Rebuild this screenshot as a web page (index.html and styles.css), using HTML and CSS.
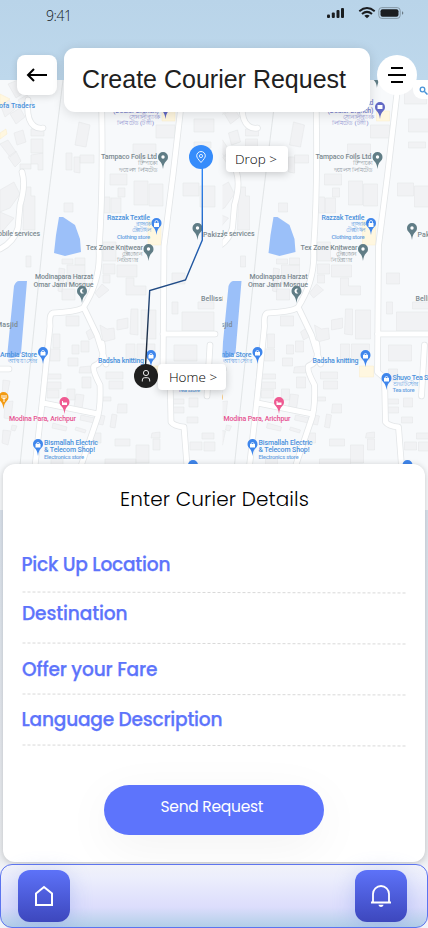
FILE: index.html
```html
<!DOCTYPE html>
<html lang="en">
<head>
<meta charset="utf-8">
<meta name="viewport" content="width=device-width, initial-scale=1">
<title>Create Courier Request</title>
<link rel="stylesheet" href="styles.css">
</head>
<body>
<main class="screen">
  <svg class="map" width="428" height="430" viewBox="0 80 428 430">
    <defs>
      <linearGradient id="route" x1="0" y1="0" x2="0" y2="1"><stop offset="0" stop-color="#2f86f6"/><stop offset=".4" stop-color="#2260b4"/><stop offset="1" stop-color="#1c1f25"/></linearGradient>
      <clipPath id="left"><rect x="0" y="80" width="223" height="430"/></clipPath>
      <clipPath id="right"><rect x="8" y="80" width="220" height="430"/></clipPath>
      <path id="pin" d="M0 8C-1-1-5 1-5-4A5 5 0 0 1 5-4C5 1 1-1 0 8Z"/>
      <path id="roads" d="M101 80Q104 180 99 250Q101 280 83 308Q75 312 53 313Q49 314 50 326L43 395 35 466M84 308L97 335 106 364M102 343Q106 362 94 366Q92 370 100 385Q101 410 96 422L81 466M43 403L98 414M184 80L173 175 164 246 163 372 170 378 171 422Q174 426 184 427L187 466M163 334H215M22 172Q26 185 20 205L18 228Q14 242 0 249M28 100Q26 120 34 126Q38 129 43 128M-5 369H9M210 345L207 396"/>
      <g id="tile">
        <path class="block" d="M8 84l10-4 7 12-9 6zM18 100l9-5 6 8-10 6zM0 104l9-4 6 9-10 8zM10 114l10-6 5 9-9 7zM14 133l9-3 3 12-9 3zM31 129h13v7h-13zM31 139h12v14h-12zM31 155l12-2v17h-5v-6h-7zM20 164h11v5h-11zM24 187h7v9h4v34l-12 0zM0 144l8-4 8 12-6 5zM8 157l8-6 5 10-6 6zM0 190l14-8 6 12-10 14-10 4zM0 212l14 6-14 16zM64 203h9v9h-9zM79 122l11 3-4 22-11-2zM66 153h6v17h-6zM80 155h14v8h-14zM74 157h6v16l-6-1zM156 125h19v13h-19zM133 144h23v14h-23zM110 174h17v11h-17zM118 188h7v9h-7zM134 181h14v24h-14zM149 184h14v22h-14zM104 197h6v16h-6zM111 198h10v15h-10zM183 183h16v13h-16zM200 186h15v21h-15zM194 119h20v13h-20zM194 142h17v6h-17zM86 84h8v14h-8zM190 86h22v18h-22zM103 242h13v19h-13zM103 264h12v10h-12zM117 265h20v12h-20zM103 275h7v8h-7zM126 278h8v8h12v9h-20zM172 273h13v11h-13zM62 289h13v11h-13zM62 259h11v5h-11zM75 258h10v7h-10zM67 265h18v19h-18zM59 268l6 1-3 23-4-1zM95 293l7-9 7 6-10 8zM26 256h5v11h-5zM66 316h13v10h-13zM53 334h7v14h-7zM86 332l6-4 4 8-7 4zM100 325l7 4 7-1 1 11-12 3zM131 309h7v26l-8-1zM141 310h15v29h-15zM172 302h6v12h-6zM182 312h32v19h-32zM198 302h16v7h-16zM72 345h7v9h-7zM81 341h8v11h-8zM117 320l11-2v10l-11 2zM126 344h9v16h-9zM137 344h18v16h-18zM174 345h23v16h-23zM50 349h10v12h-10zM68 358h10v8h-10zM80 367l11-1v7h-12zM82 377h9v11h-9zM47 374h14v5h-14zM47 382h14v7h-14zM47 390h12v8h-12zM67 389h8v11h-8zM76 394l8 1-2 14-8-2zM106 372h17v7h-17zM109 381h14v8h-14zM103 397h8v4h-8zM118 404h9v9h-10zM112 414l5 1-2 13-5-1zM100 415l5 1-2 9-5-1zM81 415l14 3-1 5-14-3zM53 423l14 4-1 4-14-3zM76 427l10 3-1 3-10-3zM115 439h15v7h-15zM136 445h13v18h-13zM152 433l8-1v6h-9zM153 439h7v11h-7zM105 459h31v6h-31zM93 433h8v10h-8zM51 459h12v6h-12zM172 399h12v5h-12zM172 407h12v6h-12zM174 369h9v12h-9zM189 398h9v9h-9zM187 417h11v6h-11zM190 442h12v8h-12zM202 433h12v6h-12zM204 442h11v9h-11zM3 380l7 1-3 15h-5zM5 402l8-1-2 18-7-1zM12 425l5 1-2 5-4-1zM3 430l8 1-3 14-6-2z"/>
        <path class="sand" d="M162 111h13v10h-13zM148 221h13v24h-13zM145 366h14v11h-14zM0 133l6-4 1 5-7 5zM0 94l10 5-10 7z"/>
        <path class="water" d="M59 217l4 0 12 8 5 14 1 13-16 4-11-3 2-18zM14 286q2-5 5-5h8l-6 72q-6 7-14 4z"/>
        <path class="rail" d="M63 80L43 240 32 348 20 465M45 345L34 465"/>
        <use class="road-edge" href="#roads"/><use class="road" href="#roads"/>
        <g class="gray">
          <text x="101" y="159" textLength="56">Tampaco Foils Ltd</text>
          <text x="-2" y="235.500" textLength="42">obile services</text>
          <text x="203" y="236.500" textLength="25">Pakizza</text>
          <text x="86" y="249.500" textLength="57">Tex Zone Knitwear</text>
          <text x="35" y="279" textLength="58">Modinapara Harzat</text>
          <text x="33.500" y="287" textLength="60">Omar Jami Mosque</text>
          <text x="-4" y="327" textLength="22">Masjid</text>
          <text x="201" y="301" textLength="23">Bellissi</text>
        </g>
        <g class="gray small"><text x="137" y="165" textLength="20">টিম্পাকো</text><text x="119" y="171.500" textLength="38">ফয়েলস লিমিটেড</text><text x="121" y="256" textLength="21">টেক্স জোন</text><text x="116" y="262" textLength="21">নিটওয়্যার</text></g>
        <g class="blue">
          <text x="-1" y="108" textLength="36">ofa Traders</text>
          <text x="107" y="219.500" textLength="43">Razzak Textile</text>
          <text x="0" y="357" textLength="37">Ambia Store</text>
          <text x="98" y="363" textLength="46">Badsha knitting</text>
          <text x="178" y="380" textLength="47">Shuvo Tea Store</text>
          <text x="44" y="444.500" textLength="54">Bismallah Electric</text>
          <text x="44" y="452" textLength="51">&amp; Telecom Shop!</text>
        </g>
        <g class="blue small"><text x="135" y="226" textLength="15">রাজ্জাক</text><text x="131" y="232" textLength="19">টেক্সটাইল</text><text x="117" y="238.500" textLength="33">Clothing store</text><text x="8" y="363" textLength="29">আম্বিয়া স্টোর</text><text x="178" y="386" textLength="25">শুভ টি স্টোর</text><text x="178" y="392" textLength="22">Tea store</text><text x="44" y="458.500" textLength="40">Electronics store</text></g>
        <g class="violet"><text x="150" y="105" textLength="9">Ltd</text><text x="113" y="113" textLength="46">(Dealer Branch)</text></g>
        <g class="violet small"><text x="128" y="119" textLength="31">সোনালী ব্যাংক</text><text x="117" y="125" textLength="37">লিমিটেড (টঙ্গী)</text></g>
        <text class="pink" x="9" y="421" textLength="67">Modina Para, Arichpur</text>
        <use href="#pin" x="165.500" y="111" fill="#6269c5"/>
        <g fill="#607d86"><use href="#pin" x="163" y="161"/><use href="#pin" x="162.500" y="80"/><use href="#pin" x="197.500" y="232"/><use href="#pin" x="148.500" y="253"/><use href="#pin" x="82" y="295"/></g>
        <g fill="#3f86ec"><use href="#pin" x="156.500" y="227"/><use href="#pin" x="43" y="356"/><use href="#pin" x="151" y="359"/><use href="#pin" x="172" y="382"/><use href="#pin" x="38" y="448"/><use href="#pin" x="193" y="469"/></g>
        <use href="#pin" x="64.500" y="406" fill="#ef5b92"/><use href="#pin" x="3.500" y="401" fill="#f39b13"/>
        <g fill="#fff"><circle cx="163" cy="157" r="1.700"/><circle cx="197.500" cy="228" r="1.700"/><circle cx="148.500" cy="249" r="1.700"/>
          <path d="M154 223h5v4h-5zM40.500 352h5v3.500h-5zM148.500 355h5v3.500h-5zM169.500 378h5v3.500h-5zM35.500 444h5v3.500h-5zM62 401h1v1.500h4v2.500h-5zM163 105h5v4h-5zM1.500 395h1v3h1v-3h1v3h1v-3h1v3l-2 1v3h-1v-3l-2-1z"/><path d="M84 289a2.500 2.500 0 1 0 0 4a2 2 0 1 1 0-4z"/></g>
        <path d="M155 223v-1a1.500 1.500 0 0 1 3 0v1M41.500 352a1.500 1.500 0 0 1 3 0M149.500 355a1.500 1.500 0 0 1 3 0M170.500 378a1.500 1.500 0 0 1 3 0M36.500 444a1.500 1.500 0 0 1 3 0" fill="none" stroke="#fff" stroke-width=".8"/>
      </g>
    </defs>
    <rect class="ground" y="80" width="428" height="430"/>
    <g clip-path="url(#left)"><use href="#tile"/></g>
    <g transform="translate(214.500)" clip-path="url(#right)"><use href="#tile"/></g>
    <rect x="413" y="78" width="30" height="21" rx="9" fill="#fff"/>
    <circle cx="422.500" cy="89.500" r="2.300" fill="none" stroke="#4a94d8" stroke-width="1.300"/><path d="M424.500 91.500l3 3" stroke="#4a94d8" stroke-width="1.500"/>
    <path d="M202.300 168V240L185.500 280 149.700 290.500 145.500 366" fill="none" stroke="url(#route)" stroke-width="1.400"/>
    <circle cx="201" cy="157" r="12" fill="#368cfb"/>
    <path d="M201 162.500C198 159 196.700 157.500 196.700 155.800A4.300 4.300 0 0 1 205.300 155.800C205.300 157.500 204 159 201 162.500Z" fill="none" stroke="#fff" stroke-width=".9"/><circle cx="201" cy="156" r="1.600" fill="none" stroke="#fff" stroke-width=".8"/>
    <circle cx="146" cy="376" r="12" fill="#202020"/>
    <circle cx="146" cy="373" r="2.600" fill="none" stroke="#fff" stroke-width=".9"/><path d="M142.300 381.500v-1.500q0-2.300 2.300-2.300h2.800q2.300 0 2.300 2.300v1.500" fill="none" stroke="#fff" stroke-width=".9"/>
  </svg>
  <button class="place drop">Drop &gt;</button>
  <button class="place home">Home &gt;</button>

  <div class="status">
    <span class="time">9:41</span>
    <svg width="80" height="16" viewBox="0 0 80 16">
      <g fill="#1a1d20"><rect x="1" y="9.500" width="3" height="3.500" rx="1"/><rect x="5.800" y="7.500" width="3" height="5.500" rx="1"/><rect x="10.500" y="5" width="3" height="8" rx="1"/><rect x="15" y="3" width="3" height="10" rx="1"/><rect x="54.500" y="4.300" width="18" height="7.400" rx="2"/><path d="M76.500 6v4q1.500-2 0-4"/></g>
      <rect x="52.800" y="2.600" width="21.400" height="10.800" rx="3" fill="none" stroke="#7f929f" stroke-width=".9"/>
      <g fill="none" stroke="#1a1d20" stroke-width="2"><path d="M33.300 6.200Q41-.2 48.700 6.200M36 9Q41 4.700 46 9"/></g><path d="M38.300 10.700q2.700-2 5.400 0L41 13.200z" fill="#1a1d20"/>
    </svg>
  </div>
  <header class="header">
    <button class="back" aria-label="Back"><svg width="22" height="16" viewBox="0 0 22 16"><path d="M21 8H2M8 2L2 8l6 6" fill="none" stroke="#000" stroke-width="2"/></svg></button>
    <h1 class="title">Create Courier Request</h1>
    <button class="menu" aria-label="Menu"><svg width="18" height="18" viewBox="0 0 18 18"><path d="M3 2h12M0 9h18M3 16h12" stroke="#000" stroke-width="2"/></svg></button>
  </header>

  <section class="sheet">
    <h2><svg width="190" height="30"><text x="1" y="22" textLength="189">Enter Curier Details</text></svg></h2>
    <div class="field one"><svg width="384" height="30"><text x="-.500" y="21" textLength="149">Pick Up Location</text></svg><svg class="rule" width="384" height="3"><path d="M.5 1L383.500 2"/></svg></div>
    <div class="field two"><svg width="384" height="30"><text x="0" y="21" textLength="105.500">Destination</text></svg><svg class="rule" width="384" height="3"><path d="M.5 1L383.500 2"/></svg></div>
    <div class="field three"><svg width="384" height="30"><text x="0" y="21" textLength="135.500">Offer your Fare</text></svg><svg class="rule" width="384" height="3"><path d="M.5 1L383.500 2"/></svg></div>
    <div class="field four"><svg width="384" height="30"><text x="-.500" y="21" textLength="201">Language Description</text></svg><svg class="rule" width="384" height="3"><path d="M.5 1L383.500 2"/></svg></div>
    <button class="send"><svg width="104" height="24"><text x="1.500" y="17" textLength="103">Send Request</text></svg></button>
  </section>
  <nav class="nav">
    <button class="tab" aria-label="Home"><svg width="20" height="22" viewBox="0 0 20 22"><path d="M2 8.500L10 2l8 6.500V20H2z" fill="none" stroke="#fff" stroke-width="2"/></svg></button>
    <button class="tab" aria-label="Notifications"><svg width="22" height="24" viewBox="0 0 22 24"><path d="M3 18.500V10A8 8 0 0 1 19 10v8.500M1 18.500h20" fill="none" stroke="#fff" stroke-width="1.800"/><path d="M8.500 20.800h5c-.5 3-4.500 3-5 0z" fill="#fff"/></svg></button>
  </nav>
</main>
</body>
</html>
```
FILE: styles.css
```css
* { box-sizing: border-box; }
body { margin: 0; }
h1, h2 { margin: 0; font-weight: 400; }
button { border: 0; padding: 0; display: flex; align-items: center; justify-content: center; }
svg { display: block; overflow: visible; }
.screen { position: relative; width: 428px; height: 928px; overflow: hidden; display: flex; flex-direction: column; background: linear-gradient(#b9d4e9 0, #bed8ec 80px, #dce4ee 510px, #eceef1 860px, #f3f4f7 870px); }
.map { position: absolute; left: 0; top: 80px; overflow: hidden; font-family: Roboto, "Noto Sans", sans-serif; font-size: 7px; font-weight: 500; }
.ground { fill: #f7f9fb; }
.block { fill: #f1f2f4; stroke: #e6e8ea; stroke-width: .6; }
.sand { fill: #fff7e0; stroke: #f8edcb; stroke-width: .5; }
.water { fill: #9cc0f9; }
.rail { fill: none; stroke: #d9dcde; stroke-width: .7; }
.road, .road-edge { fill: none; stroke: #fff; stroke-width: 5; stroke-linejoin: round; stroke-linecap: round; }
.road-edge { stroke: #e3e6e8; stroke-width: 6.6; }
.gray { fill: #7b8990; }
.blue { fill: #4b91dc; }
.violet { fill: #7c82cb; }
.pink { fill: #e65391; }
.small { font-size: 5.8px; opacity: .85; }
.place { position: absolute; background: #fff; border-radius: 4px; height: 26px; color: #000; font: 350 13.5px "Open Sans", sans-serif; box-shadow: 0 2px 8px #0003; white-space: nowrap; }
.drop { left: 226px; top: 146px; width: 62px; padding-right: 2px; }
.home { left: 158px; top: 364px; width: 68px; padding-left: 2px; }
.status { position: relative; height: 48px; display: flex; justify-content: space-between; padding: 5px 22px 0 46px; }
.time { font: 350 14px/22px "Open Sans", sans-serif; letter-spacing: -.4px; color: #101418; }
.header { position: relative; display: flex; align-items: center; gap: 7px; padding: 0 11px 0 17px; height: 64px; }
.back, .menu { width: 40px; height: 40px; background: #fff; flex: none; margin-top: -10px; box-shadow: 0 2px 7px #0002; }
.back { border-radius: 8px; }
.menu { border-radius: 50%; box-shadow: none; }
.title { width: 306px; height: 64px; border-radius: 11px; background: #fff; padding-right: 6px; text-align: center; font: 25px/62px "Liberation Sans", sans-serif; color: #202020; box-shadow: 0 2px 12px #0002; white-space: nowrap; }
.sheet { position: relative; margin: 352px 3px 0; height: 398px; background: #fff; border-radius: 12px; padding: 20px 19px 0; box-shadow: 0 1px 6px #0003; font-family: Poppins, Inter, sans-serif; }
.sheet h2 { display: flex; justify-content: center; height: 30px; font-size: 20px; }
.sheet h2 text { font-weight: 300; }
.field { display: flex; flex-direction: column; justify-content: space-between; font-size: 18.6px; font-weight: 500; }
.field text { fill: #5d74fb; stroke: #5d74fb; stroke-width: .25; }
.one { height: 44px; margin-top: 36px; }
.two { height: 46px; margin-top: 5px; }
.three { height: 41px; margin-top: 10px; }
.four { height: 42px; margin-top: 9px; }
.rule { stroke: #d9d9d9; stroke-width: 1; stroke-dasharray: 3 2; }
.send { width: 220px; height: 50px; border-radius: 25px; background: #5d74fc; margin: 38px auto 0 82px; padding: 0 7px 6px 0; box-shadow: 0 12px 50px #0000000d; font: 15.5px Poppins, Inter, sans-serif; }
.send text { fill: #fff; }
.nav { position: relative; height: 64px; margin-top: 2px; border: 1px solid #5d74ef; border-radius: 12px; padding: 5px 20px 0 17px; display: flex; justify-content: space-between; background: linear-gradient(#f1f2f9 0, #eceefc 20%, #dcddfc 68%, #b2cfe7); }
.tab { width: 52px; height: 52px; border-radius: 12px; background: linear-gradient(#5d72f8, #3d47bd); box-shadow: 0 4px 22px #6b86e855; }
```
